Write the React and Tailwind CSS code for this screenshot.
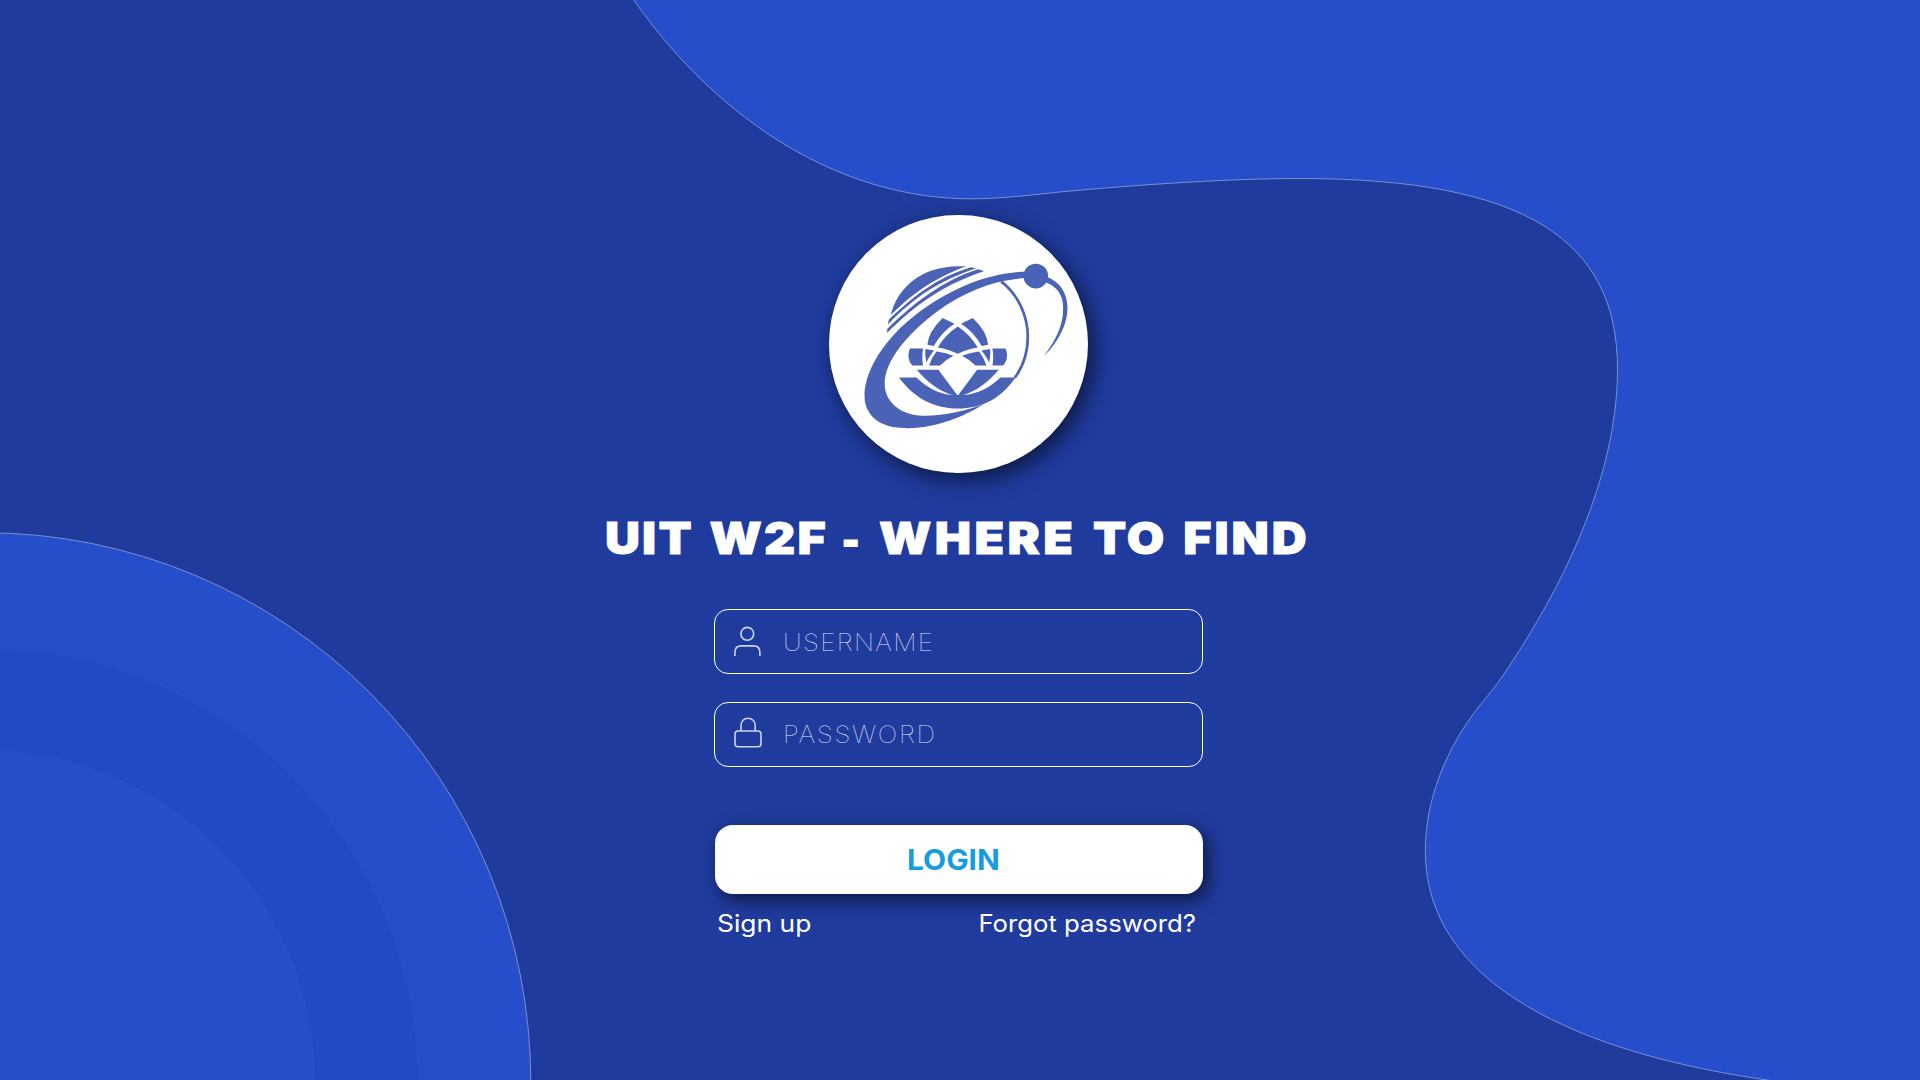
const PETAL_PATHS = [
  'M270 445 H309 C306 462 306 480 309 496 H277 C264 484 262 460 270 445Z',
  'M316 447 L342 451 C332 463 324 474 319 488 C316 472 315 460 316 447Z',
  'M349 454 Q375 457 400 467 Q378 478 360 496 H327 Q335 472 349 454Z',
  'M368 354 L403 371 Q365 395 341 438 L322 434 Q325 395 368 354Z',
  'M290 509 H355 L413 587 L390 583 C355 570 320 545 290 509Z',
];

function Petals() {
  return PETAL_PATHS.map((d) => <path key={d} d={d} />);
}

function Logo() {
  return (
    <svg viewBox="27 45 775 775" className="size-full" fill="#4a63b6" aria-hidden="true">
      <path d="M212 345 C230 270 300 190 438 199 C350 232 290 270 212 345Z" />
      <path d="M206 359 C280 290 345 235 452 202 L468 205 C350 245 280 295 204 373Z" />
      <path d="M202 386 C280 310 370 240 474 208 L492 213 C370 255 290 310 201 399Z" />
      <path d="M620 215 C480 215 320 300 225 400 C150 480 125 560 136 610 C150 665 200 684 265 684 C350 684 430 650 492 612 C440 632 370 648 310 647 C240 645 194 605 194 550 C194 490 250 410 350 335 C440 270 530 238 620 234Z" />
      <circle cx="647" cy="228" r="37" />
      <path d="M680 230 C720 245 742 280 742 325 C742 370 716 425 671 468 C709 417 729 375 729 325 C729 287 715 262 678 247Z" />
      <path d="M543 244 C596 285 623 350 623 410 C623 455 608 500 584 533" fill="none" stroke="#4a63b6" strokeWidth="8" />
      <path d="M237 532 H289 C320 562 355 580 392 585 H434 C475 580 510 562 541 532 H586 C545 592 490 625 413 625 C340 625 280 592 237 532Z" />
      <path d="M413 379 Q450 403 473 442 Q440 447 413 461 Q386 447 353 442 Q376 403 413 379Z" />
      <Petals />
      <g transform="translate(826 0) scale(-1 1)">
        <Petals />
      </g>
    </svg>
  );
}

function Backdrop() {
  return (
    <svg viewBox="0 0 1920 1080" className="absolute inset-0 size-full" aria-hidden="true">
      <path
        d="M633 -1 C722 126 845 198.8 971 198.8 C1003 198.8 1035 194.5 1060 192 C1140 184.5 1230 178.5 1300 178.5 C1525 178.5 1617.5 240 1617.5 369 C1617.5 478 1561 590 1503.3 675 C1494 688.5 1487 696.5 1480 705 C1446 748 1425.3 800 1425.3 851 C1425.3 985 1580 1054 1774 1081 H1922 V-1Z"
        fill="#264eca"
        stroke="#8296d2"
        strokeWidth="0.9"
      />
      <ellipse cx="-16" cy="1082" rx="546.8" ry="549.3" fill="#264eca" stroke="#8296d2" strokeWidth="0.9" />
      <ellipse cx="-16" cy="1082" rx="433.3" ry="433.5" fill="#2349c4" />
      <ellipse cx="-16" cy="1082" rx="331.5" ry="331.8" fill="#264fc8" />
    </svg>
  );
}

function UserIcon() {
  return (
    <svg viewBox="0 0 32 40" className="h-10 w-8 shrink-0" fill="none" stroke="#cdd3e8" strokeWidth="1.6">
      <circle cx="15.3" cy="11.8" r="6.4" />
      <path d="M2.9 34 V30.5 Q2.9 23.9 9.5 23.9 H21.3 Q27.9 23.9 27.9 30.5 V34" />
    </svg>
  );
}

function LockIcon() {
  return (
    <svg viewBox="0 0 32 40" className="h-10 w-8 shrink-0" fill="none" stroke="#cdd3e8" strokeWidth="1.6">
      <rect x="3" y="16" width="26" height="15.8" rx="3" />
      <path d="M9 16 V10.3 A7.1 7.1 0 0 1 23.2 10.3 V16" />
    </svg>
  );
}

function Field({ icon, type, label, className = '' }) {
  return (
    <label className="flex h-[65px] items-center rounded-[14px] border border-white pl-[17px]">
      {icon}
      <input
        type={type}
        placeholder={label}
        aria-label={label}
        className={`ml-[19px] w-[370px] origin-left scale-x-[1.08] bg-transparent text-[24px] font-thin text-white outline-none placeholder:text-[#e4e8f6] ${className}`}
      />
    </label>
  );
}

export default function App() {
  return (
    <main className="relative h-screen w-full overflow-hidden bg-[#1f3b9e] font-['Inter','Open_Sans',sans-serif]">
      <Backdrop />
      <div className="relative flex w-[1917px] flex-col items-center pt-[214.5px]">
        <div className="size-[258.5px] rounded-full bg-white shadow-[6px_7px_22px_rgba(0,0,0,0.6)]">
          <Logo />
        </div>
        <h1 className="mt-[37px] -ml-[3px] scale-x-[1.1] text-[44px] leading-[56px] font-black tracking-[2px] whitespace-nowrap text-white [-webkit-text-stroke:0.9px_white] [word-spacing:4.4px]">
          <span className="-mr-px">UIT</span> W2F{' '}
          <span className="-mr-[4.4px] -ml-[2.5px] inline-block origin-left translate-y-[2px] scale-x-[0.8]">-</span>{' '}
          <span className="tracking-[3.1px]">WHERE</span> TO <span className="tracking-[2.7px]">FIND</span>
        </h1>
        <form className="mt-[43px] flex w-[489px] flex-col" onSubmit={(e) => e.preventDefault()}>
          <Field icon={<UserIcon />} type="text" label="USERNAME" className="pt-[2px] tracking-[1.25px]" />
          <div className="mt-7 flex flex-col">
            <Field icon={<LockIcon />} type="password" label="PASSWORD" className="tracking-[1.6px]" />
          </div>
          <button
            type="submit"
            className="mt-[58px] ml-px h-[69px] rounded-[18px] bg-white pr-[11px] text-[28px] font-bold text-[#189cdf] shadow-[5px_6px_18px_rgba(0,0,0,0.6)]"
          >
            <span className="inline-block scale-x-[1.07]">LOGIN</span>
          </button>
          <div className="mt-[14px] flex justify-between pr-[7px] pl-[3px] text-[24px] leading-8 text-white">
            <a href="#signup" className="origin-left scale-x-[1.1]">Sign up</a>
            <a href="#forgot" className="origin-right scale-x-[1.072]">Forgot password?</a>
          </div>
        </form>
      </div>
    </main>
  );
}
